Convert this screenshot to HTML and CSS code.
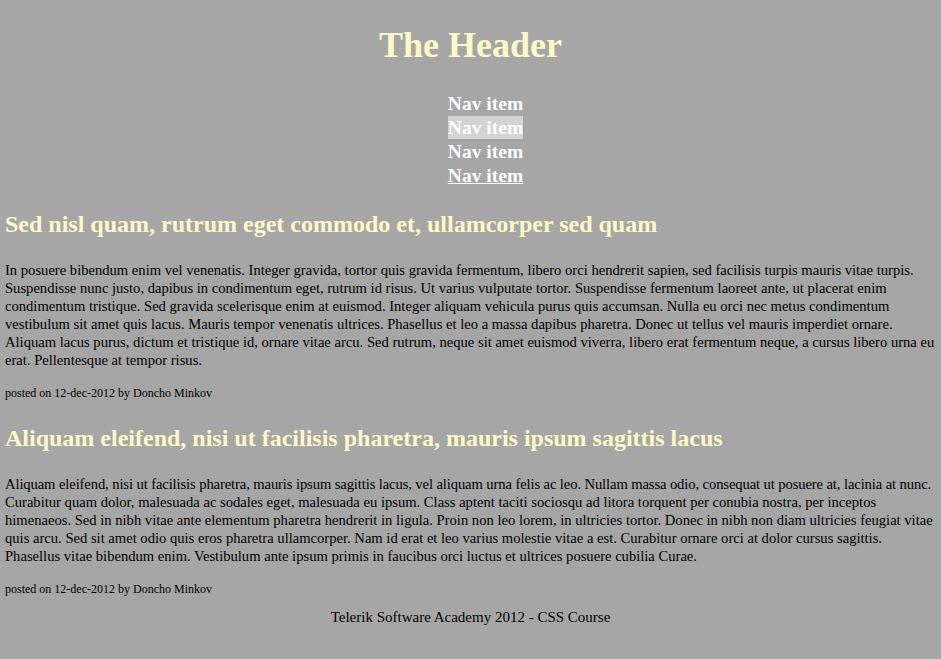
FILE: index.html
```html
<!DOCTYPE html>
<html>
<head>
<meta charset="utf-8">
<title>The Header</title>
<link rel="stylesheet" href="styles.css">
</head>
<body>
<header class="site-header">
  <h1 class="title">The Header</h1>
  <nav class="nav">
    <ul class="nav-list">
      <li class="nav-item"><a class="nav-link" href="#">Nav item</a></li>
      <li class="nav-item"><a class="nav-link active" href="#">Nav item</a></li>
      <li class="nav-item"><a class="nav-link" href="#">Nav item</a></li>
      <li class="nav-item"><a class="nav-link underlined" href="#">Nav item</a></li>
    </ul>
  </nav>
</header>
<main class="content">
  <article class="post">
    <h2 class="post-title">Sed nisl quam, rutrum eget commodo et, ullamcorper sed quam</h2>
    <p class="post-text">In posuere bibendum enim vel venenatis. Integer gravida, tortor quis gravida fermentum, libero orci hendrerit sapien, sed facilisis turpis mauris vitae turpis. Suspendisse nunc justo, dapibus in condimentum eget, rutrum id risus. Ut varius vulputate tortor. Suspendisse fermentum laoreet ante, ut placerat enim condimentum tristique. Sed gravida scelerisque enim at euismod. Integer aliquam vehicula purus quis accumsan. Nulla eu orci nec metus condimentum vestibulum sit amet quis lacus. Mauris tempor venenatis ultrices. Phasellus et leo a massa dapibus pharetra. Donec ut tellus vel mauris imperdiet ornare. Aliquam lacus purus, dictum et tristique id, ornare vitae arcu. Sed rutrum, neque sit amet euismod viverra, libero erat fermentum neque, a cursus libero urna eu erat. Pellentesque at tempor risus.</p>
    <p class="post-meta">posted on 12-dec-2012 by Doncho Minkov</p>
  </article>
  <article class="post">
    <h2 class="post-title">Aliquam eleifend, nisi ut facilisis pharetra, mauris ipsum sagittis lacus</h2>
    <p class="post-text"><span class="lead-in">Aliquam eleifend, nisi ut facilisis pharetra, mauris ipsum sagittis lacus, vel aliquam urna felis ac leo. Nullam massa odio, consequat ut posuere at, lacinia at nunc.</span> Curabitur quam dolor, malesuada ac sodales eget, malesuada eu ipsum. Class aptent taciti sociosqu ad litora torquent per conubia nostra, per inceptos himenaeos. Sed in nibh vitae ante elementum pharetra hendrerit in ligula. Proin non leo lorem, in ultricies tortor. Donec in nibh non diam ultricies feugiat vitae quis arcu. Sed sit amet odio quis eros pharetra ullamcorper. Nam id erat et leo varius molestie vitae a est. Curabitur ornare orci at dolor cursus sagittis. Phasellus vitae bibendum enim. Vestibulum ante ipsum primis in faucibus orci luctus et ultrices posuere cubilia Curae.</p>
    <p class="post-meta">posted on 12-dec-2012 by Doncho Minkov</p>
  </article>
</main>
<footer class="site-footer">Telerik Software Academy 2012 - CSS Course</footer>
</body>
</html>
```

FILE: styles.css
```css
html {
  background: #a6a6a6;
}
body {
  margin: 0;
  padding: 25px 5px 0;
  font-family: "Liberation Serif", "Times New Roman", serif;
  font-size: 15px;
  color: #000;
}
.site-header {
  text-align: center;
}
.title {
  margin: 0;
  font-size: 36px;
  line-height: 40px;
  color: #fff8c8;
  font-weight: bold;
}
.nav {
  margin-top: 27px;
}
.nav-list {
  list-style: none;
  margin: 0;
  padding: 0 0 0 30px;
}
.nav-item {
  font-size: 19.5px;
  line-height: 24px;
}
.nav-link {
  color: #fff;
  font-weight: bold;
  text-decoration: none;
  padding: 1px 0;
}
.nav-link.active {
  background: #d3d3d3;
}
.nav-link.underlined {
  text-decoration: underline;
}
.post-title {
  margin: 22px 0 0;
  font-size: 24px;
  line-height: 28px;
  color: #fff8c8;
  font-weight: bold;
}
.post + .post .post-title {
  margin-top: 23px;
}
.post-text {
  margin: 23px 0 0;
  font-size: 14.6px;
  line-height: 18px;
}
.lead-in {
  letter-spacing: -0.1px;
}
.post-meta {
  margin: 16px 0 0;
  font-size: 12px;
  line-height: 16px;
}
.site-footer {
  text-align: center;
  margin-top: 11px;
  font-size: 15px;
  line-height: 18px;
}
```
